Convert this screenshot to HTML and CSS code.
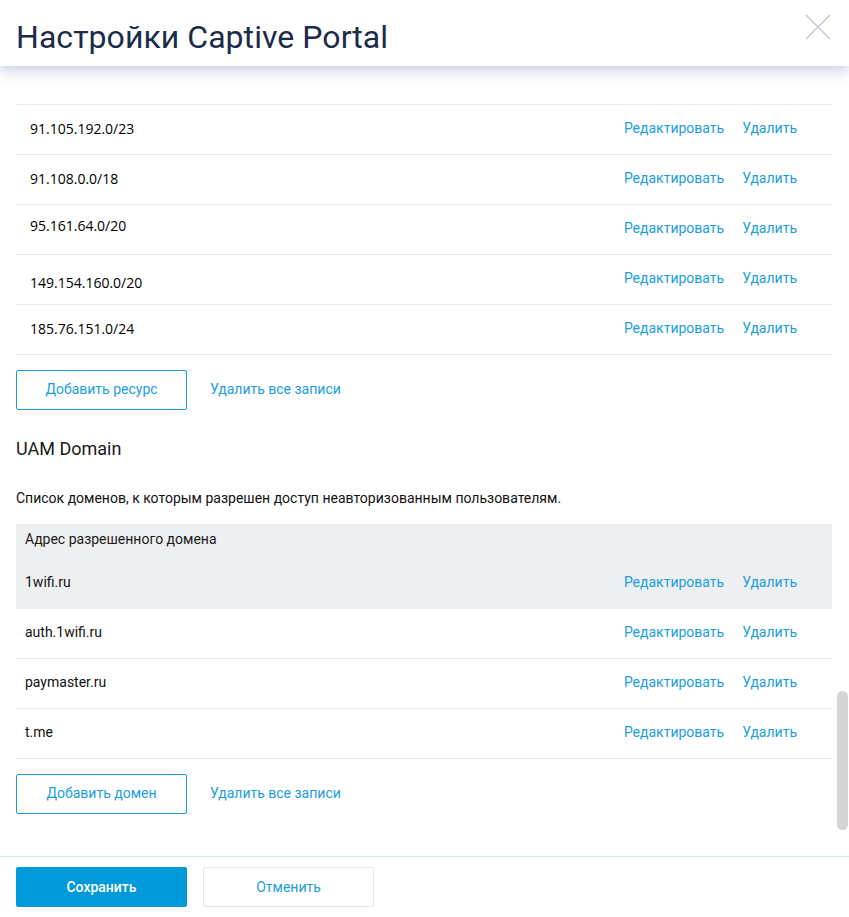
FILE: index.html
```html
<!DOCTYPE html>
<html lang="ru">
<head>
  <meta charset="UTF-8" />
  <meta name="viewport" content="width=device-width, initial-scale=1.0"/>
  <title>Настройки Captive Portal</title>
  <link rel="stylesheet" href="styles.css">
</head>

<body>
  <div class="modal">
    <header class="modal-head">
      <h1>Настройки Captive Portal</h1>
      <button class="close-btn" aria-label="Закрыть">
        <svg width="26" height="26" viewBox="0 0 26 26">
          <path d="M1 1 L25 25 M25 1 L1 25" stroke="#c3c6d2" stroke-width="1.4" fill="none"/>
        </svg>
      </button>
    </header>

    <div class="modal-body">
      <!-- Walled garden resources -->
      <div class="list">
        <div class="row"><span class="ip">91.105.192.0/23</span><div class="actions"><a href="#">Редактировать</a><a href="#">Удалить</a></div></div>
        <div class="row"><span class="ip">91.108.0.0/18</span><div class="actions"><a href="#">Редактировать</a><a href="#">Удалить</a></div></div>
        <div class="row"><span class="ip up">95.161.64.0/20</span><div class="actions"><a href="#">Редактировать</a><a href="#">Удалить</a></div></div>
        <div class="row"><span class="ip down">149.154.160.0/20</span><div class="actions"><a href="#">Редактировать</a><a href="#">Удалить</a></div></div>
        <div class="row"><span class="ip">185.76.151.0/24</span><div class="actions"><a href="#">Редактировать</a><a href="#">Удалить</a></div></div>
      </div>
      <div class="btn-row">
        <button class="btn-outline">Добавить ресурс</button>
        <a href="#" class="link">Удалить все записи</a>
      </div>

      <!-- UAM Domain -->
      <h2>UAM Domain</h2>
      <p class="desc">Список доменов, к которым разрешен доступ неавторизованным пользователям.</p>
      <div class="table">
        <div class="table-head">Адрес разрешенного домена</div>
        <div class="row domain hover"><span>1wifi.ru</span><div class="actions"><a href="#">Редактировать</a><a href="#">Удалить</a></div></div>
        <div class="row domain"><span>auth.1wifi.ru</span><div class="actions"><a href="#">Редактировать</a><a href="#">Удалить</a></div></div>
        <div class="row domain"><span>paymaster.ru</span><div class="actions"><a href="#">Редактировать</a><a href="#">Удалить</a></div></div>
        <div class="row domain"><span>t.me</span><div class="actions"><a href="#">Редактировать</a><a href="#">Удалить</a></div></div>
      </div>
      <div class="btn-row">
        <button class="btn-outline">Добавить домен</button>
        <a href="#" class="link">Удалить все записи</a>
      </div>

      <div class="scroll-thumb"></div>
    </div>

    <footer class="modal-foot">
      <button class="btn-primary">Сохранить</button>
      <button class="btn-cancel">Отменить</button>
    </footer>
  </div>
</body>
</html>
```

FILE: styles.css
```css
body {
  margin: 0;
  font-family: Roboto, "Noto Sans", sans-serif;
  background: #fff;
  color: #1a1a1a;
}

.modal {
  width: 849px;
  height: 917px;
  overflow: hidden;
}

/* Header */
.modal-head {
  position: relative;
  z-index: 1;
  height: 66px;
  display: flex;
  align-items: center;
  justify-content: space-between;
  padding: 0 18px 0 16px;
  background: #fff;
  box-shadow: 0 5px 12px rgba(70, 90, 170, 0.28);
}

.modal-head h1 {
  margin: 0;
  margin-top: 8px;
  font-size: 32px;
  font-weight: 400;
  color: #1c2b4b;
  letter-spacing: 0.05px;
}

.close-btn {
  background: none;
  border: none;
  padding: 0;
  margin-top: -12px;
  cursor: pointer;
  display: flex;
}

/* Body */
.modal-body {
  position: relative;
  height: 790px;
  overflow: hidden;
  padding: 38px 17px 0 16px;
  box-sizing: border-box;
}

.scroll-thumb {
  position: absolute;
  top: 625px;
  right: 1px;
  width: 11px;
  height: 139px;
  border-radius: 6px;
  background: #d5d5d5;
}

.list {
  border-top: 1px solid #ebebeb;
}

.row {
  height: 49px;
  box-sizing: content-box;
  display: flex;
  align-items: center;
  border-bottom: 1px solid #ebebeb;
  font-size: 14px;
}

.row > * {
  margin-bottom: 3px;
}

.ip {
  font-family: "Open Sans", "Noto Sans", sans-serif;
  padding-left: 14px;
  color: #000;
  font-size: 14px;
}

.row > .ip.up { margin-bottom: 9px; }
.row > .ip.down { margin-bottom: -6px; }

.actions {
  margin-left: auto;
  display: flex;
  gap: 18px;
  padding-right: 35px;
}

.actions a, .link {
  color: #1a9ee0;
  text-decoration: none;
  font-size: 14px;
}

.btn-row {
  display: flex;
  align-items: center;
  gap: 23px;
  margin-top: 15px;
}

.btn-outline {
  width: 171px;
  height: 40px;
  padding-bottom: 3px;
  background: #fff;
  border: 1px solid #1a9ee0;
  border-radius: 2px;
  color: #1a9ee0;
  font-family: Roboto, sans-serif;
  font-size: 14px;
  cursor: pointer;
}

.link {
  margin-bottom: 3px;
}

h2 {
  margin: 27px 0 0;
  font-size: 18px;
  font-weight: 400;
  line-height: 24px;
  color: #1a1a1a;
}

.desc {
  margin: 27px 0 0;
  font-size: 14px;
  line-height: 20px;
  color: #111;
}

.table {
  margin-top: 16px;
}

.table-head {
  height: 35px;
  display: flex;
  align-items: center;
  padding: 0 0 6px 9px;
  box-sizing: border-box;
  background: #eeeff1;
  font-size: 14px;
  color: #1a1a1a;
}

.row.domain span {
  padding-left: 9px;
  color: #111;
}

.row.hover {
  background: #eeeff1;
  border-bottom-color: #eeeff1;
}

/* Footer */
.modal-foot {
  border-top: 1px solid #d6e4f2;
  padding: 10px 16px;
  display: flex;
  gap: 16px;
}

.btn-primary, .btn-cancel {
  width: 171px;
  height: 40px;
  border-radius: 2px;
  font-family: Roboto, sans-serif;
  font-size: 14px;
  cursor: pointer;
}

.btn-primary {
  background: #0099d9;
  border: none;
  color: #fff;
  font-weight: 500;
}

.btn-cancel {
  background: #fff;
  border: 1px solid #e3e8ee;
  color: #1a9ee0;
}
```
